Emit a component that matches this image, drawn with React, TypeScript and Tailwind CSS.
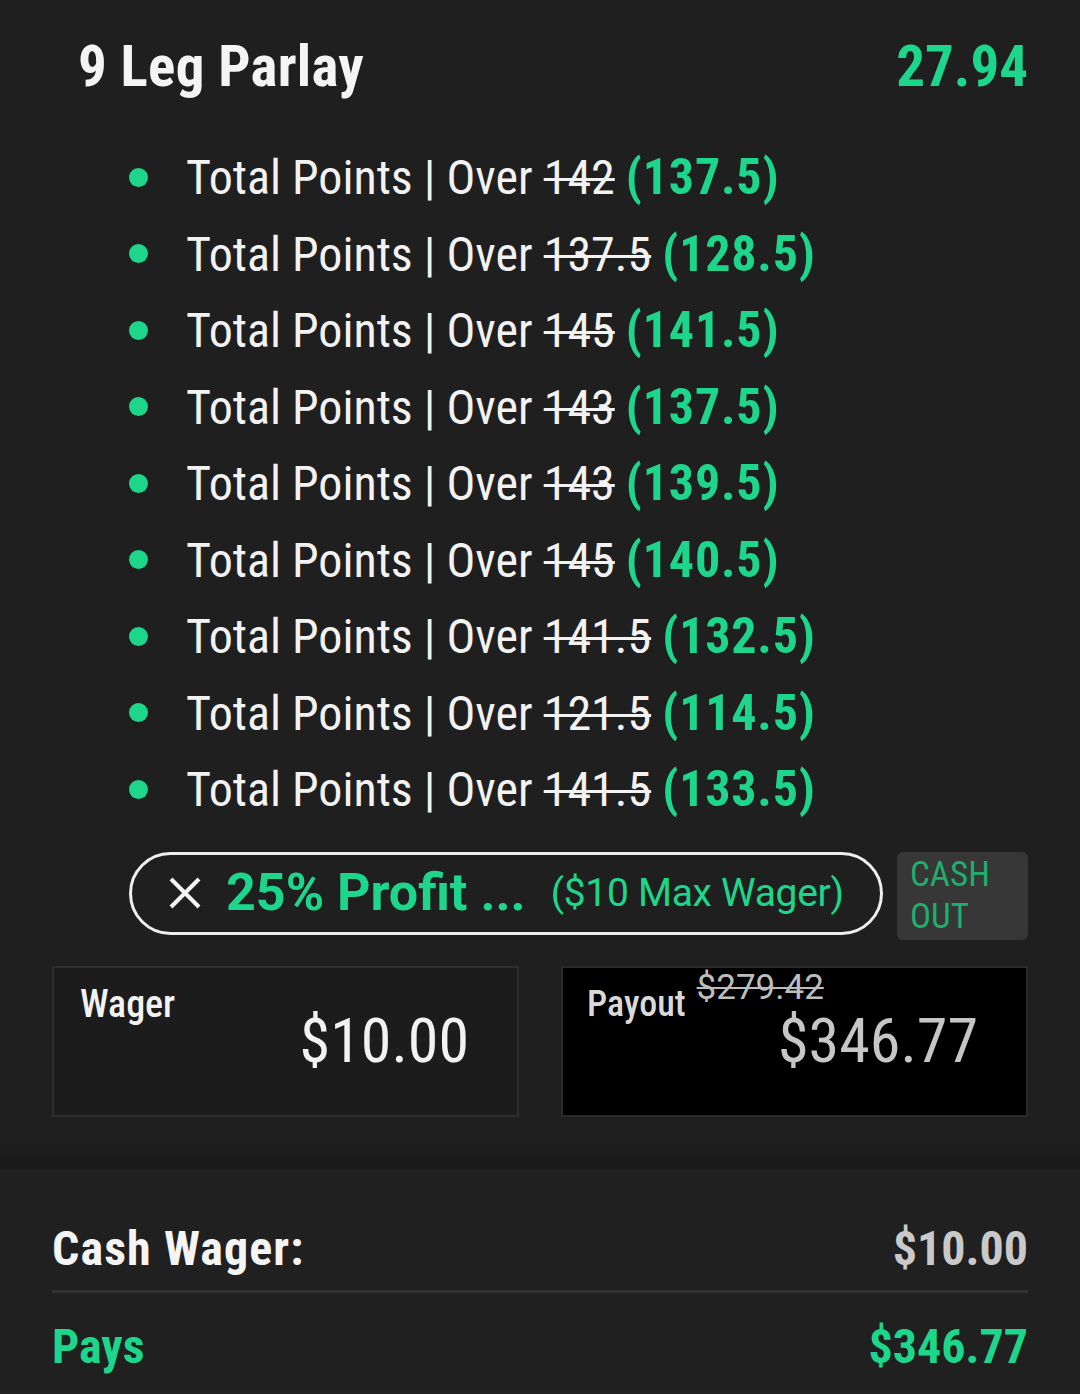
const legs = [
  { was: "142", now: "137.5" },
  { was: "137.5", now: "128.5" },
  { was: "145", now: "141.5" },
  { was: "143", now: "137.5" },
  { was: "143", now: "139.5" },
  { was: "145", now: "140.5" },
  { was: "141.5", now: "132.5" },
  { was: "121.5", now: "114.5" },
  { was: "141.5", now: "133.5" },
];

function LegRow({ was, now }: { was: string; now: string }) {
  return (
    <li className="flex h-[76.5px] items-center">
      <span className="h-[19px] w-[19px] shrink-0 rounded-full bg-[#1ed68b]" />
      <span className="ml-[38px] whitespace-nowrap text-[48px] leading-none text-[#f2f2f2]">
        Total Points | Over <span className="line-through decoration-[3px]">{was}</span>{" "}
        <span className="text-[50px] font-bold tracking-[0.8px] text-[#1ed68b]">({now})</span>
      </span>
    </li>
  );
}

export default function App() {
  return (
    <div className="min-h-screen bg-[#1f1f1f] font-['Roboto_Condensed',Roboto,sans-serif] font-stretch-condensed">
      <div className="px-[52px]">
        <div className="flex items-center justify-between pl-[26px] pt-[36px]">
          <h1 className="text-[57px] font-bold leading-[62px] tracking-[0.3px] text-[#f4f4f4]">9 Leg Parlay</h1>
          <span className="text-[57px] font-bold leading-[62px] text-[#1ed68b]">27.94</span>
        </div>

        <ul className="mt-[41px] pl-[77px]">
          {legs.map((l, i) => (
            <LegRow key={i} was={l.was} now={l.now} />
          ))}
        </ul>

        <div className="mt-[24px] flex items-stretch gap-[14px] pl-[77px]">
          <div className="flex h-[83px] flex-1 items-center rounded-full border-[3px] border-[#efefef] pl-[36px]">
            <svg width="34" height="34" viewBox="0 0 34 34" className="shrink-0">
              <path d="M3 3 L31 31 M31 3 L3 31" stroke="#f4f4f4" strokeWidth="4" strokeLinecap="butt" />
            </svg>
            <span className="ml-[24px] font-['Roboto',sans-serif] text-[52px] font-bold font-stretch-normal leading-none text-[#1ed68b]">
              25% Profit ...
            </span>
            <span className="ml-[25px] font-['Roboto',sans-serif] text-[39px] font-stretch-normal leading-none tracking-[-0.3px] text-[#1ed68b]">
              ($10 Max Wager)
            </span>
          </div>
          <button className="flex h-[88px] w-[131px] flex-col items-start justify-center rounded-[6px] bg-[#373737] pl-[13px] text-left text-[35px] leading-[42px] text-[#1fae6c]">
            <span>CASH</span>
            <span>OUT</span>
          </button>
        </div>

        <div className="mt-[26px] grid grid-cols-2 gap-[42px]">
          <div className="flex h-[151px] flex-col border-2 border-[#2e2e2e] bg-[#1c1c1c] pl-[26px] pr-[48px] pt-[16px]">
            <span className="text-[38px] font-medium leading-[40px] text-[#f2f2f2]">Wager</span>
            <span className="-mt-[14px] self-end text-[62px] leading-[62px] text-[#f2f2f2]">$10.00</span>
          </div>
          <div className="flex h-[151px] flex-col border-2 border-[#2a2a2a] bg-black pl-[24px] pr-[48px] pt-[16px]">
            <div className="flex items-start">
              <span className="text-[36px] font-medium leading-[40px] text-[#d9d9d9]">Payout</span>
              <span className="-mt-[16px] ml-[11px] font-['Roboto',sans-serif] text-[35px] font-stretch-normal leading-[40px] text-[#bdbdbd] line-through decoration-2">
                $279.42
              </span>
            </div>
            <span className="-mt-[14px] self-end text-[62px] leading-[62px] text-[#c6c6c6]">$346.77</span>
          </div>
        </div>
      </div>

      <div className="mt-[20px] h-[32px] bg-gradient-to-b from-[#1f1f1f] to-[#181818]" />
      <div className="bg-[#202020] px-[52px] pb-[20px] pt-[51px]">
        <div className="flex items-center justify-between pb-[12px]">
          <span className="text-[48px] font-bold leading-[58px] tracking-[1.1px] text-[#f4f4f4]">Cash Wager:</span>
          <span className="text-[48px] font-bold leading-[58px] text-[#c9c9c9]">$10.00</span>
        </div>
        <div className="h-[3px] bg-[#333333]" />
        <div className="flex items-center justify-between pt-[25px]">
          <span className="text-[48px] font-bold leading-[58px] text-[#1ed68b]">Pays</span>
          <span className="text-[48px] font-bold leading-[58px] text-[#1ed68b]">$346.77</span>
        </div>
      </div>
    </div>
  );
}
